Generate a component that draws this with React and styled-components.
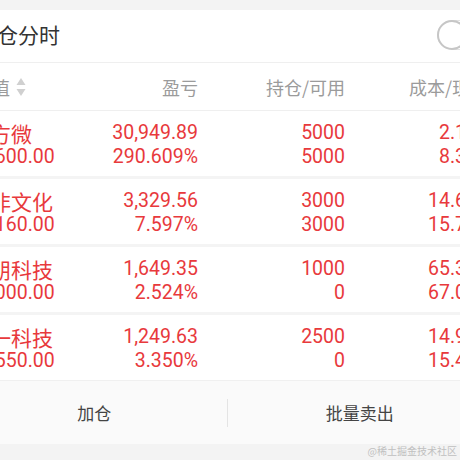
import React from 'react'
import styled, { createGlobalStyle } from 'styled-components'

const GlobalStyle = createGlobalStyle`
  html, body {
    margin: 0;
    padding: 0;
    background: #ffffff;
    overflow: hidden;
  }
  body {
    font-family: Roboto, "Noto Sans CJK SC", sans-serif;
  }
`

const RED = '#e8393c'

const holdings = [
  { name: '芯方微', value: '41,600.00', profit: '30,949.89', pct: '290.609%', hold: '5000', avail: '5000', cost: '2.130', price: '8.320' },
  { name: '中非文化', value: '47,160.00', profit: '3,329.56', pct: '7.597%', hold: '3000', avail: '3000', cost: '14.610', price: '15.720' },
  { name: '华朋科技', value: '67,000.00', profit: '1,649.35', pct: '2.524%', hold: '1000', avail: '0', cost: '65.351', price: '67.000' },
  { name: '中一科技', value: '38,550.00', profit: '1,249.63', pct: '3.350%', hold: '2500', avail: '0', cost: '14.920', price: '15.420' }
]

const App = () => {
  return (
    <>
      <GlobalStyle />
      <Page>
        <TopStrip />
        <TitleBar>
          <Title>持仓分时</Title>
          <Switch>
            <Knob />
          </Switch>
        </TitleBar>
        <HeadRow>
          <HeadCell $left>
            市值
            <SortIcon viewBox='0 0 10 18' width='10' height='18'>
              <path d='M5 0 L9.5 7 L0.5 7 Z' fill='#d0d0d0' />
              <path d='M5 18 L9.5 11 L0.5 11 Z' fill='#d0d0d0' />
            </SortIcon>
          </HeadCell>
          <HeadCell>盈亏</HeadCell>
          <HeadCell>持仓/可用</HeadCell>
          <HeadCell>成本/现价</HeadCell>
        </HeadRow>
        <List>
          {holdings.map((h) => (
            <Row key={h.name}>
              <Cell $left>
                <Name>{h.name}</Name>
                <Num>{h.value}</Num>
              </Cell>
              <Cell>
                <Num>{h.profit}</Num>
                <Num>{h.pct}</Num>
              </Cell>
              <Cell>
                <Num>{h.hold}</Num>
                <Num>{h.avail}</Num>
              </Cell>
              <Cell>
                <Num>{h.cost}</Num>
                <Num>{h.price}</Num>
              </Cell>
            </Row>
          ))}
        </List>
        <ActionBar>
          <Action>加仓</Action>
          <Divider />
          <Action>批量卖出</Action>
        </ActionBar>
        <BottomStrip>
          <Watermark>@稀土掘金技术社区</Watermark>
        </BottomStrip>
      </Page>
    </>
  )
}

const Page = styled.div`
  width: 530px;
  margin-left: -38px;
  display: flex;
  flex-direction: column;
  background: #ffffff;
`

const TopStrip = styled.div`
  height: 10px;
  background: #f3f3f3;
`

const TitleBar = styled.div`
  height: 52px;
  display: flex;
  align-items: center;
  justify-content: space-between;
  padding: 0 3px 0 14px;
  border-bottom: 1px solid #efefef;
`

const Title = styled.div`
  font-size: 21px;
  line-height: 28px;
  color: #333333;
  font-family: "Noto Sans CJK SC", sans-serif;
  margin-top: -4px;
`

const Switch = styled.div`
  width: 52px;
  height: 30px;
  border-radius: 16px;
  border: 1.5px solid #e2e2e2;
  box-sizing: border-box;
  display: flex;
  align-items: center;
  margin-top: -2px;
`

const Knob = styled.div`
  width: 30px;
  height: 30px;
  border-radius: 50%;
  border: 2px solid #c6c6c6;
  box-sizing: border-box;
  background: #ffffff;
  margin-left: -1.5px;
`

const columns = '120px 109px 147px 143px'

const HeadRow = styled.div`
  height: 47px;
  display: grid;
  grid-template-columns: ${columns};
  align-items: center;
  padding: 0 4px 0 7px;
  border-bottom: 1px solid #efefef;
`

const HeadCell = styled.div`
  display: flex;
  align-items: center;
  justify-content: ${({ $left }) => ($left ? 'flex-start' : 'flex-end')};
  padding-left: ${({ $left }) => ($left ? '5px' : '0')};
  font-size: 18px;
  line-height: 24px;
  color: #9b9b9b;
  font-family: "Noto Sans CJK SC", sans-serif;
`

const SortIcon = styled.svg`
  margin-left: 6px;
`

const List = styled.div`
  display: flex;
  flex-direction: column;
  gap: 3px;
  background: #f4f4f4;
`

const Row = styled.div`
  height: 65px;
  display: grid;
  grid-template-columns: ${columns};
  align-items: center;
  padding: 0 4px 0 7px;
  background: #ffffff;
`

const Cell = styled.div`
  display: flex;
  flex-direction: column;
  align-items: ${({ $left }) => ($left ? 'flex-start' : 'flex-end')};
  color: ${RED};
  margin-top: 2px;
`

const Name = styled.div`
  font-size: 21px;
  line-height: 24px;
  height: 24px;
  font-family: "Noto Sans CJK SC", sans-serif;
  white-space: nowrap;
`

const Num = styled.div`
  font-size: 19.5px;
  line-height: 24px;
  font-family: Roboto, sans-serif;
  white-space: nowrap;
`

const ActionBar = styled.div`
  height: 63px;
  display: flex;
  align-items: center;
  background: #fafafa;
  border-top: 1px solid #f0f0f0;
`

const Action = styled.div`
  flex: 1;
  text-align: center;
  font-size: 17px;
  color: #444444;
  font-family: "Noto Sans CJK SC", sans-serif;
`

const Divider = styled.div`
  width: 1px;
  height: 28px;
  background: #e4e4e4;
`

const BottomStrip = styled.div`
  height: 20px;
  background: #f3f3f3;
  display: flex;
  justify-content: flex-end;
  align-items: flex-start;
  padding-right: 35px;
`

const Watermark = styled.div`
  font-size: 10px;
  line-height: 14px;
  color: #c0c0c0;
  font-family: "Noto Sans CJK SC", sans-serif;
`

export default App
